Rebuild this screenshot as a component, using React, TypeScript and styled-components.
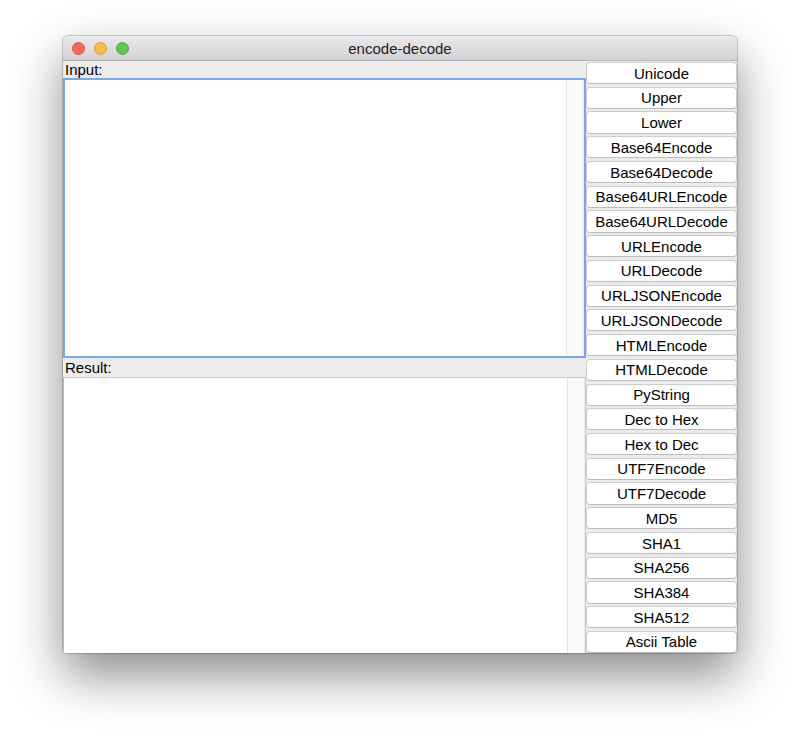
import React from "react";
import styled, { createGlobalStyle } from "styled-components";

const GlobalStyle = createGlobalStyle`
    html, body {
        margin: 0;
        padding: 0;
        background: #ffffff;
    }
    body {
        font-family: "Liberation Sans", Arial, sans-serif;
    }
`

const Stage = styled.div`
    width: 800px;
    height: 744px;
    padding: 36px 0 0 63px;
    box-sizing: border-box;
`

const Window = styled.div`
    width: 674px;
    height: 617px;
    display: flex;
    flex-direction: column;
    background: #ececec;
    border-radius: 5px 5px 4px 4px;
    overflow: hidden;
    box-shadow: 0 22px 50px rgba(0, 0, 0, 0.46), 0 0 0 1px rgba(0, 0, 0, 0.18);
`

const TitleBar = styled.div`
    height: 24px;
    flex: none;
    display: grid;
    grid-template-columns: 1fr auto 1fr;
    align-items: center;
    background: linear-gradient(#ebe9eb, #d3d1d3);
    border-bottom: 1px solid #b3b3b3;
`

const Lights = styled.div`
    display: flex;
    gap: 9px;
    padding-left: 8.5px;
`

const Light = styled.span<{ $fill: string; $edge: string }>`
    width: 13px;
    height: 13px;
    box-sizing: border-box;
    border-radius: 50%;
    background: ${p => p.$fill};
    border: 0.5px solid ${p => p.$edge};
`

const Title = styled.div`
    font-size: 15px;
    color: #1e1e1e;
`

const Body = styled.div`
    flex: 1;
    display: flex;
    min-height: 0;
`

const LeftPane = styled.div`
    width: 523px;
    display: flex;
    flex-direction: column;
`

const Label = styled.div<{ $h: number }>`
    height: ${p => p.$h}px;
    line-height: ${p => p.$h}px;
    flex: none;
    font-size: 15px;
    color: #000;
    padding-left: 2px;
    box-sizing: border-box;
`

const Editor = styled.div<{ $focused?: boolean; $h?: number }>`
    ${p => (p.$h ? `height: ${p.$h}px; flex: none;` : `flex: 1;`)}
    display: flex;
    background: #fff;
    box-sizing: border-box;
    border: ${p => (p.$focused ? "2px solid #78a6e8" : "1px solid #c9c9c9")};
    ${p => (p.$focused ? "" : "border-bottom: none; border-left-color: #b9b9b9;")}
`

const TextArea = styled.textarea`
    flex: 1;
    border: none;
    outline: none;
    resize: none;
    margin: 0;
    padding: 2px 4px;
    font-family: "Liberation Sans", Arial, sans-serif;
    font-size: 13px;
    background: transparent;
`

const ScrollTrack = styled.div`
    width: 16px;
    flex: none;
    background: #fafafa;
    border-left: 1px solid #e6e6e6;
    border-right: 1px solid #ececec;
`

const ButtonColumn = styled.div`
    flex: 1;
    display: flex;
    flex-direction: column;
    gap: 2.6px;
    padding: 1px 0 0 0;
`

const ActionButton = styled.button`
    flex: 1;
    min-height: 0;
    margin: 0;
    padding: 0;
    background: #fff;
    border: 1px solid #cdcdcd;
    border-bottom-color: #bdbdbd;
    border-radius: 4px;
    font-family: "Liberation Sans", Arial, sans-serif;
    font-size: 15px;
    color: #000;
    line-height: 1;
`

const actions = [
    "Unicode",
    "Upper",
    "Lower",
    "Base64Encode",
    "Base64Decode",
    "Base64URLEncode",
    "Base64URLDecode",
    "URLEncode",
    "URLDecode",
    "URLJSONEncode",
    "URLJSONDecode",
    "HTMLEncode",
    "HTMLDecode",
    "PyString",
    "Dec to Hex",
    "Hex to Dec",
    "UTF7Encode",
    "UTF7Decode",
    "MD5",
    "SHA1",
    "SHA256",
    "SHA384",
    "SHA512",
    "Ascii Table",
];

const App = () => {
    return (
        <Stage>
            <GlobalStyle />
            <Window>
                <TitleBar>
                    <Lights>
                        <Light $fill="#ee6a5f" $edge="#d8584d" />
                        <Light $fill="#f5bf4f" $edge="#d9a23c" />
                        <Light $fill="#62c554" $edge="#4ea944" />
                    </Lights>
                    <Title>encode-decode</Title>
                    <div />
                </TitleBar>
                <Body>
                    <LeftPane>
                        <Label $h={17}>Input:</Label>
                        <Editor $focused $h={280}>
                            <TextArea />
                            <ScrollTrack />
                        </Editor>
                        <Label $h={19}>Result:</Label>
                        <Editor>
                            <TextArea />
                            <ScrollTrack />
                        </Editor>
                    </LeftPane>
                    <ButtonColumn>
                        {actions.map(a => (
                            <ActionButton key={a}>{a}</ActionButton>
                        ))}
                    </ButtonColumn>
                </Body>
            </Window>
        </Stage>
    );
};

export default App;
